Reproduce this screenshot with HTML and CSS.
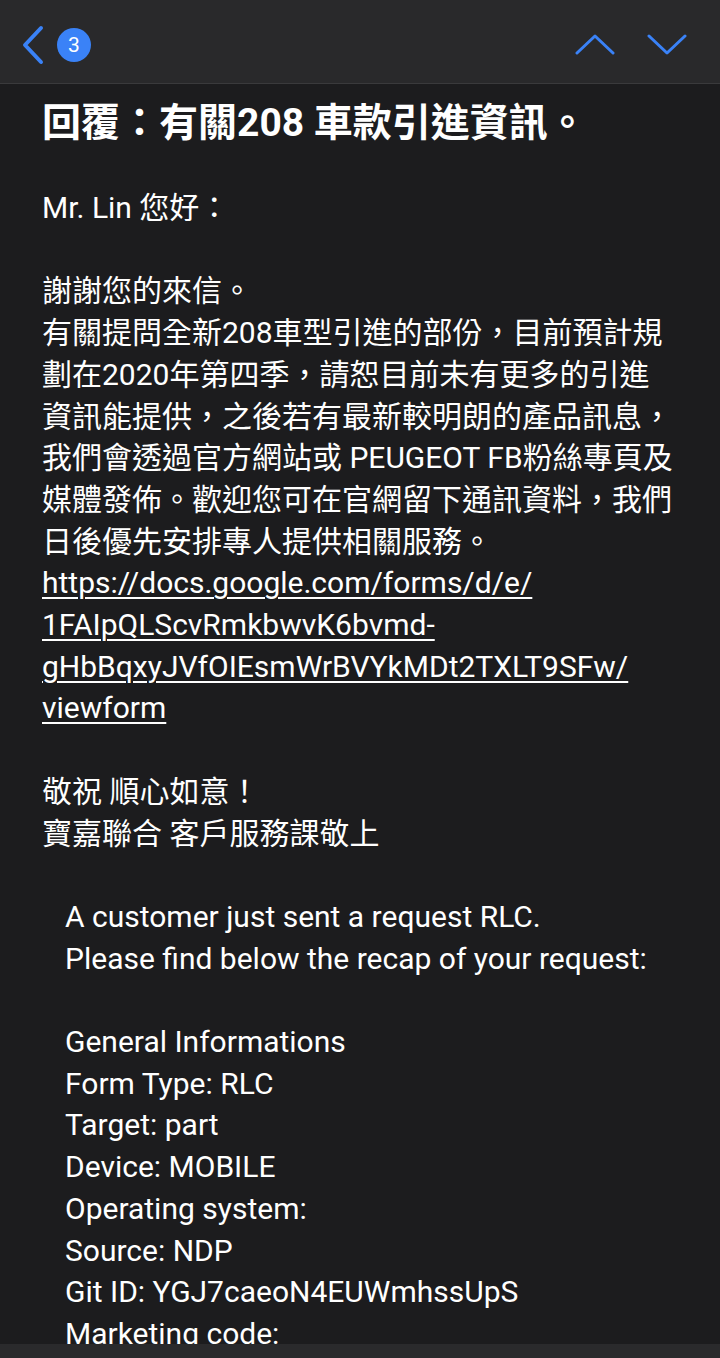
FILE: index.html
```html
<!DOCTYPE html>
<html lang="zh-Hant">
<head>
    <meta charset="UTF-8">
    <title>回覆：有關208 車款引進資訊。</title>
    <link rel="stylesheet" href="styles.css">
</head>
<body>
    <div id="screen">
        <div class="navbar">
            <div class="nav-left">
                <svg class="icon-back" width="24" height="40" viewBox="0 0 24 40">
                    <path d="M19 3 L3 20 L19 37" />
                </svg>
                <span class="badge">3</span>
            </div>
            <div class="nav-right">
                <svg class="icon-arrow" width="40" height="24" viewBox="0 0 40 24">
                    <path d="M2 20 L20 3 L38 20" />
                </svg>
                <svg class="icon-arrow" width="40" height="24" viewBox="0 0 40 24">
                    <path d="M2 3 L20 20 L38 3" />
                </svg>
            </div>
        </div>

        <div class="message">
            <h1 class="subject">回覆：有關208 車款引進資訊。</h1>

            <p>Mr. Lin 您好：</p>

            <p>
                謝謝您的來信。<br>
                有關提問全新208車型引進的部份，目前預計規<br>
                劃在2020年第四季，請恕目前未有更多的引進<br>
                資訊能提供，之後若有最新較明朗的產品訊息，<br>
                我們會透過官方網站或 PEUGEOT FB粉絲專頁及<br>
                媒體發佈。歡迎您可在官網留下通訊資料，我們<br>
                日後優先安排專人提供相關服務。<br>
                <a href="#">https://docs.google.com/forms/d/e/<br>1FAIpQLScvRmkbwvK6bvmd-<br>gHbBqxyJVfOIEsmWrBVYkMDt2TXLT9SFw/<br>viewform</a>
            </p>

            <p>
                敬祝 順心如意！<br>
                寶嘉聯合 客戶服務課敬上
            </p>

            <div class="quoted">
                <p>
                    A customer just sent a request RLC.<br>
                    Please find below the recap of your request:
                </p>
                <p>
                    General Informations<br>
                    Form Type: RLC<br>
                    Target: part<br>
                    Device: MOBILE<br>
                    Operating system:<br>
                    Source: NDP<br>
                    Git ID: YGJ7caeoN4EUWmhssUpS<br>
                    Marketing code:
                </p>
            </div>
        </div>

        <div class="toolbar"></div>
    </div>
</body>
</html>
```

FILE: styles.css
```css
html, body {
    margin: 0;
    padding: 0;
    background-color: #1c1c1e;
}

body {
    font-family: Roboto, "Noto Sans CJK TC", sans-serif;
    color: #ffffff;
}

#screen {
    height: 1358px;
    display: flex;
    flex-direction: column;
    overflow: hidden;
}

.navbar {
    height: 84px;
    box-sizing: border-box;
    flex-shrink: 0;
    display: flex;
    justify-content: space-between;
    align-items: center;
    background-color: #29292b;
    border-bottom: 1px solid #3a3a3c;
    padding: 6px 33px 0 22px;
}

.nav-left {
    display: flex;
    align-items: center;
    gap: 11px;
}

.nav-right {
    display: flex;
    align-items: center;
    gap: 32px;
}

.icon-back path,
.icon-arrow path {
    fill: none;
    stroke: #3a82f7;
    stroke-linecap: round;
    stroke-linejoin: round;
}

.icon-back path {
    stroke-width: 4;
}

.icon-arrow path {
    stroke-width: 3;
}

.badge {
    width: 34px;
    height: 34px;
    border-radius: 50%;
    background-color: #3a82f7;
    color: #ffffff;
    font-size: 21px;
    line-height: 34px;
    text-align: center;
}

.message {
    flex: 1;
    overflow: hidden;
    padding: 0 40px 0 42px;
    font-size: 30px;
    line-height: 41.7px;
}

.subject {
    font-size: 39px;
    font-weight: bold;
    line-height: 48px;
    margin: 15px 0 40px 0;
    white-space: nowrap;
}

.message p {
    margin: 0 0 41.7px 0;
    white-space: nowrap;
}

.message a {
    color: #ffffff;
    text-decoration: underline;
    text-underline-offset: 4px;
    text-decoration-thickness: 1.5px;
}

.quoted {
    padding-left: 23px;
}

.toolbar {
    height: 14px;
    flex-shrink: 0;
    background-color: #2a2a2c;
}
```
